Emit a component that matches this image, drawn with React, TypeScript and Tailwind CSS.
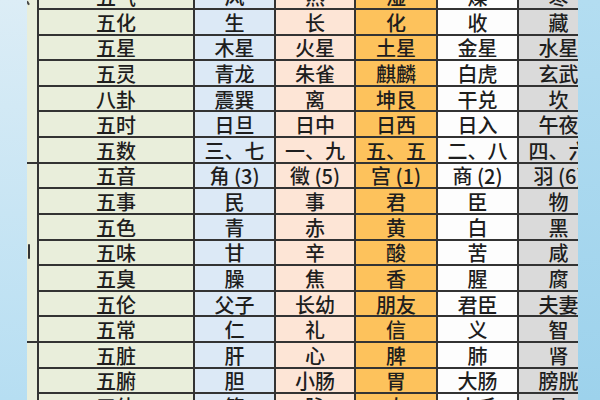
const rows: string[][] = [
  ["五气", "风", "热", "湿", "燥", "寒"],
  ["五化", "生", "长", "化", "收", "藏"],
  ["五星", "木星", "火星", "土星", "金星", "水星"],
  ["五灵", "青龙", "朱雀", "麒麟", "白虎", "玄武"],
  ["八卦", "震巽", "离", "坤艮", "干兑", "坎"],
  ["五时", "日旦", "日中", "日西", "日入", "午夜"],
  ["五数", "三、七", "一、九", "五、五", "二、八", "四、六"],
  ["五音", "角 (3)", "徵 (5)", "宫 (1)", "商 (2)", "羽 (6)"],
  ["五事", "民", "事", "君", "臣", "物"],
  ["五色", "青", "赤", "黄", "白", "黑"],
  ["五味", "甘", "辛", "酸", "苦", "咸"],
  ["五臭", "臊", "焦", "香", "腥", "腐"],
  ["五伦", "父子", "长幼", "朋友", "君臣", "夫妻"],
  ["五常", "仁", "礼", "信", "义", "智"],
  ["五脏", "肝", "心", "脾", "肺", "肾"],
  ["五腑", "胆", "小肠", "胃", "大肠", "膀胱"],
  ["五体", "筋", "脉", "肉", "皮毛", "骨"],
];

const cellColors = [
  "bg-[#e9eedb] border-l-2",
  "bg-[#dce9f6]",
  "bg-[#fde5d6]",
  "bg-[#fdc25c]",
  "bg-[#fdfdfd]",
  "bg-[#dadada]",
];

export default function App() {
  return (
    <div
      className="w-[600px] h-[400px] overflow-hidden flex text-[#1e1e1e]"
      style={{ fontFamily: '"Noto Sans CJK SC", "Noto Sans", sans-serif' }}
    >
      <div className="w-[27px] shrink-0 bg-gradient-to-b from-[#dcedf6] to-[#b6def2]" />
      <div className="w-[551px] shrink-0 overflow-hidden">
        <div className="flex mt-[-15.6px]">
          <div className="w-[10px] shrink-0 flex flex-col bg-[#e9eedb]">
            <div className="h-[179.34px] border-b-2 border-[#333] flex flex-col items-start">
              <span className="mt-[17px] w-[2px] h-[4px] bg-[#444] rotate-[-30deg]" />
            </div>
            <div className="h-[179.34px] border-b-2 border-[#333] flex items-center">
              <span className="w-[2px] h-[15px] ml-[1px] mt-[-2px] bg-[#333] rounded-full" />
            </div>
            <div className="flex-1" />
          </div>
          <div className="flex flex-col">
            {rows.map((row, i) => (
              <div
                key={i}
                className="grid grid-cols-[158px_81px_80px_82px_81px_81px] h-[25.62px] border-b-2 border-[#333]"
              >
                {row.map((text, j) => (
                  <div
                    key={j}
                    className={`${cellColors[j]} border-r-2 border-[#333] flex items-center justify-center pt-[2px] text-[20px] leading-[20px] font-medium whitespace-nowrap overflow-hidden`}
                  >
                    {text}
                  </div>
                ))}
              </div>
            ))}
          </div>
        </div>
      </div>
      <div className="w-[22px] shrink-0 bg-gradient-to-b from-[#b3ddf1] to-[#9dd2ec]" />
    </div>
  );
}
